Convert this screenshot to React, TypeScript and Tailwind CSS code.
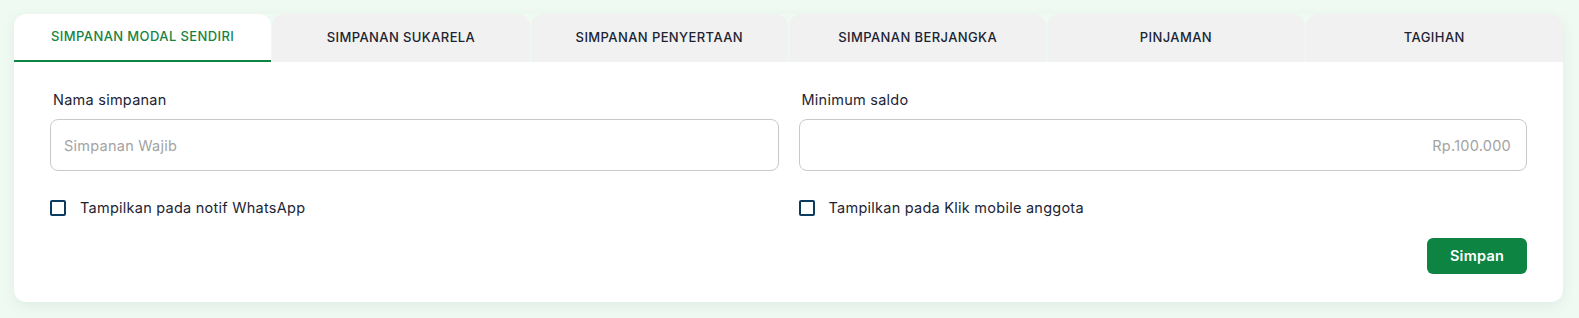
export default function App() {
  const tabs = [
    "SIMPANAN MODAL SENDIRI",
    "SIMPANAN SUKARELA",
    "SIMPANAN PENYERTAAN",
    "SIMPANAN BERJANGKA",
    "PINJAMAN",
    "TAGIHAN",
  ];
  const active = 0;

  return (
    <div
      className="min-h-screen bg-[#effaf3] pt-[14px] pl-[14px] pr-[16px] pb-4"
      style={{ fontFamily: "Inter, 'Noto Sans', sans-serif" }}
    >
      <div className="rounded-xl bg-white shadow-[0_4px_14px_rgba(20,60,40,0.07)] overflow-hidden">
        {/* Tabs */}
        <div className="flex gap-px bg-[#effaf3]">
          {tabs.map((t, i) => (
            <div
              key={t}
              className={
                i === active
                  ? "flex-1 h-12 rounded-t-xl bg-white border-b-2 border-[#0e8443] flex items-center justify-center text-[13px] tracking-[0.4px] font-medium text-[#17843f]"
                  : "flex-1 h-12 rounded-t-xl bg-[#f1f1f1] flex items-center justify-center text-[13px] tracking-[0.4px] font-medium text-[#1c2434]"
              }
            >
              {t}
            </div>
          ))}
        </div>

        {/* Form */}
        <div className="px-[36px] pt-[28px] pb-[28px]">
          <div className="grid grid-cols-2 gap-x-5">
            <div>
              <label className="block pl-[3px] text-[14.5px] tracking-[0.25px] leading-5 text-[#1c2434]">
                Nama simpanan
              </label>
              <input
                className="mt-[9px] w-full h-[52px] rounded-lg border border-[#c9c9c9] px-[13px] text-[14.5px] tracking-[0.25px] text-[#1c2434] placeholder:text-[#a3a3a3] outline-none"
                placeholder="Simpanan Wajib"
              />
            </div>
            <div>
              <label className="block pl-[3px] text-[14.5px] tracking-[0.25px] leading-5 text-[#1c2434]">
                Minimum saldo
              </label>
              <input
                className="mt-[9px] w-full h-[52px] rounded-lg border border-[#c9c9c9] px-[15px] text-right text-[14.5px] tracking-[0.25px] text-[#1c2434] placeholder:text-[#a3a3a3] outline-none"
                placeholder="Rp.100.000"
              />
            </div>

            <label className="mt-[27px] flex items-center gap-[14px] text-[14.5px] tracking-[0.25px] leading-5 text-[#1c2434]">
              <span className="w-4 h-4 border-2 border-[#0d3b5e] rounded-[2px]" />
              Tampilkan pada notif WhatsApp
            </label>
            <label className="mt-[27px] flex items-center gap-[14px] text-[14.5px] tracking-[0.25px] leading-5 text-[#1c2434]">
              <span className="w-4 h-4 border-2 border-[#0d3b5e] rounded-[2px]" />
              Tampilkan pada Klik mobile anggota
            </label>
          </div>

          <div className="mt-5 flex justify-end">
            <button className="w-[100px] h-9 rounded-md bg-[#0e8443] text-white text-[14.5px] tracking-[0.25px] font-semibold">
              Simpan
            </button>
          </div>
        </div>
      </div>
    </div>
  );
}
